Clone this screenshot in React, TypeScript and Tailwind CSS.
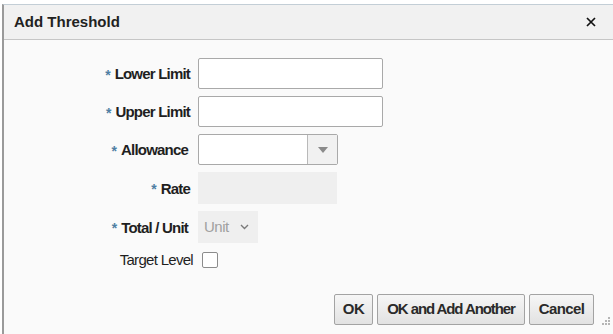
import React from 'react';

const font = { fontFamily: '"Liberation Sans", Arial, sans-serif' };

const Req: React.FC = () => (
  <span className="text-[#4f7fa3] text-[14px] font-bold leading-none self-start mt-[8px] mr-[4px]">*</span>
);

const Label: React.FC<{ text: string; required?: boolean }> = ({ text, required = true }) => (
  <div className="flex items-center justify-end h-full pt-[2px]">
    {required && <Req />}
    <span className="font-bold text-[15px] tracking-[-0.8px] text-[#1f1f1f]">{text}</span>
  </div>
);

const Btn: React.FC<{ w: string; t?: string; children: React.ReactNode }> = ({ w, t = 'tracking-[-0.6px]', children }) => (
  <button
    className={`${w} ${t} h-[31px] border border-[#a3a3a3] rounded-[2px] bg-gradient-to-b from-[#f6f6f6] to-[#e2e2e2] font-bold text-[15px] text-[#2a2a2a]`}
  >
    {children}
  </button>
);

export default function App() {
  return (
    <div className="w-[613px] h-[334px] bg-white overflow-hidden" style={font}>
      <div className="relative mt-[4px] ml-[2px] h-[330px] border-l-2 border-t border-l-[#9a9a9a] border-t-[#c3ced6] flex flex-col">
        {/* header */}
        <div className="h-[35px] bg-[#f1f1f1] border-b border-[#c6c6c6] flex items-center justify-between pl-[10px] pr-[17px]">
          <span className="font-bold text-[15px] text-[#222]">Add Threshold</span>
          <svg width="10" height="10" viewBox="0 0 10 10">
            <path d="M1 1 L9 9 M9 1 L1 9" stroke="#111" strokeWidth="1.7" />
          </svg>
        </div>

        {/* body */}
        <div className="flex-1 bg-[#fafafa] flex flex-col">
          <div className="grid grid-cols-[186px_auto] gap-x-2 gap-y-[7px] pt-[18px] justify-start">
            <Label text="Lower Limit" />
            <div className="w-[185px] h-[31px] bg-white border border-[#a9a9a9] rounded-[2px]" />

            <Label text="Upper Limit" />
            <div className="w-[185px] h-[31px] bg-white border border-[#a9a9a9] rounded-[2px]" />

            <div className="pr-[2px]"><Label text="Allowance" /></div>
            <div className="w-[140px] h-[31px] bg-white border border-[#a9a9a9] rounded-[2px] flex">
              <div className="flex-1" />
              <div className="w-[30px] border-l border-[#b9b9b9] bg-[#f1f1f1] flex items-center justify-center">
                <svg width="10" height="6" viewBox="0 0 10 6">
                  <path d="M0 0 L10 0 L5 6 Z" fill="#8a8a8a" />
                </svg>
              </div>
            </div>

            <Label text="Rate" />
            <div className="w-[139px] h-[32px] bg-[#efefef]" />

            <div className="pr-[2px]"><Label text="Total / Unit" /></div>
            <div className="w-[60px] h-[32px] bg-[#efefef] flex items-center justify-between pl-[6px] pr-[9px]">
              <span className="text-[15px] tracking-[-0.5px] text-[#a0a0a0]">Unit</span>
              <svg width="9" height="6" viewBox="0 0 9 6">
                <path d="M1 1 L4.5 4.5 L8 1" stroke="#7a7a7a" strokeWidth="1.4" fill="none" />
              </svg>
            </div>

            <div className="flex items-center justify-end -mr-[3px] h-[18px] pt-[2px]">
              <span className="text-[15px] text-[#1f1f1f] tracking-[-0.7px]">Target Level</span>
            </div>
            <div className="h-[18px] flex items-center pl-[4px] pt-[2px]">
              <div className="w-[16px] h-[16px] bg-white border border-[#8c8c8c] rounded-[2px]" />
            </div>
          </div>

          {/* footer */}
          <div className="mt-auto flex justify-end gap-[4px] pr-[19px] pb-[9px]">
            <Btn w="w-[39px]">OK</Btn>
            <Btn w="w-[148px]" t="tracking-[-1.1px]">OK and Add Another</Btn>
            <Btn w="w-[65px]">Cancel</Btn>
          </div>
        </div>

        {/* resize grip */}
        <svg className="absolute right-[3px] bottom-[7px]" width="10" height="10" viewBox="0 0 10 10">
          <g fill="#b5b5b5">
            <rect x="8" y="0" width="2" height="2" />
            <rect x="5" y="3" width="2" height="2" />
            <rect x="8" y="3" width="2" height="2" />
            <rect x="2" y="6" width="2" height="2" />
            <rect x="5" y="6" width="2" height="2" />
            <rect x="8" y="6" width="2" height="2" />
          </g>
        </svg>
      </div>
    </div>
  );
}
